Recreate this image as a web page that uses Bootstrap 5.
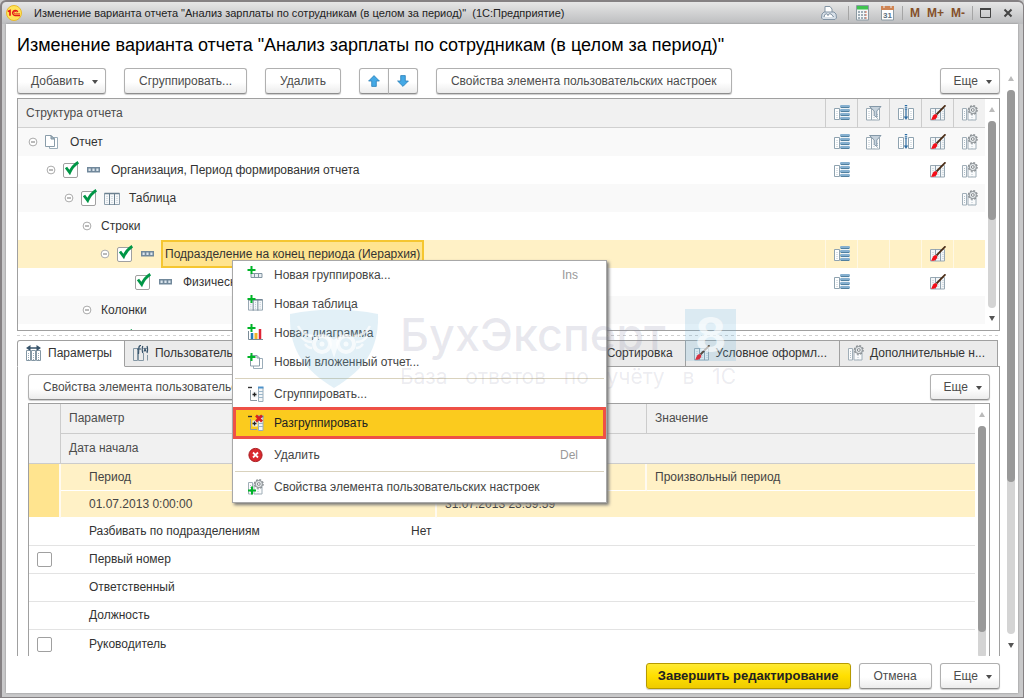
<!DOCTYPE html>
<html lang="ru">
<head>
<meta charset="utf-8">
<meta name="viewport" content="width=device-width, initial-scale=1">
<title>Изменение варианта отчета</title>
<link href="https://cdn.jsdelivr.net/npm/bootstrap@5.3.0/dist/css/bootstrap.min.css" rel="stylesheet">
<style>
:root{--line:#a0a0a0;--soft:#e3e3e3;--sel:#fff1c6;--selstrong:#ffe48f;--accent:#fbcb1e}
body{font-family:"Liberation Sans",Arial,sans-serif;font-size:12px;line-height:16px;color:#333;background:#c9c9ca;border:solid #858183;border-width:2px 1px 1px 2px;border-radius:6px 6px 0 0;overflow:hidden}
.titlebar{height:22px;padding:0 10px 0 4px;background:linear-gradient(#e6e6e6,#bcbdbf);color:#222;font-size:11px;border-radius:5px 5px 0 0}
.titlebar button{border:0;background:none;padding:0;line-height:16px;color:#84502a;font-weight:700;font-size:12px}
.titlebar .tools{gap:7px}
.titlebar .vsep{width:1px;height:14px;background:#a5a5a5}
.client{margin:0 5px 4px 4px;background:#fff;box-shadow:0 0 2px #888}
h1{font-size:18px;line-height:22px;color:#000;margin:10px 11px 12px}
svg{display:block;flex:none}
.work{padding:0 4px 0 11px}
.toolbar{gap:18px}
.b1c{--bs-btn-padding-x:14px;--bs-btn-padding-y:4px;--bs-btn-font-size:12px;--bs-btn-line-height:16px;--bs-btn-border-radius:3px;--bs-btn-color:#4c4c4c;--bs-btn-border-color:#b0b0b0;border-bottom-color:#8e8e8e;background:linear-gradient(#fff 55%,#ececec);box-shadow:0 1px 1px #ccc;white-space:nowrap}
.b1c.dropdown-toggle::after{border-width:3px;border-top-width:4px;vertical-align:1px;margin-left:8px}
.b1c.dropdown-toggle{padding-left:13px;padding-right:7px}
.b1c.arrow-btn{padding:6px 8px}
.b1c.primary{--bs-btn-padding-x:11px;--bs-btn-font-size:13px;background:linear-gradient(#ffea33,#ffdf00 50%,#eecb00);border-color:#b69a00;color:#222;font-weight:700}
.pane{border:1px solid var(--line);background:#fff}
.tree-pane{height:233px;overflow:hidden}
.grid1c{width:100%;table-layout:fixed;border-collapse:separate;border-spacing:0}
.grid1c td,.grid1c th{padding:0 8px;height:28px;font-weight:400;white-space:nowrap}
.grid1c thead th{background:#f1f1f1;color:#4c4c4c}
.tree thead th{height:29px;border-bottom:1px solid #d0d0d0}
.tree thead th+th{border-left:1px solid #ccc}
.tree .ic-col{width:32px;padding:0 7px 0 8px}
.tree tbody .ic-col{padding-left:9px}
.tree tbody .current .ic-col{padding-left:8px}
.tree tbody tr:nth-child(odd){background:#f9f9f9}
.tree tbody tr.current{background:var(--sel)}
.tree tr.current td+td{border-left:1px solid #fff8e4}
.tree td:first-child{padding-left:10px}
.tree .lv1{padding-left:18px}.tree .lv2{padding-left:36px}.tree .lv3{padding-left:54px}.tree .lv4{padding-left:72px}.tree .lv5{padding-left:107px}
.node{gap:7px;height:28px}
.node .caption{padding-left:2px}
.node .picked{margin-left:-2px;padding:4px 2px;border:2px solid #f5c630;background:var(--selstrong);height:28px}
.check1c{appearance:none;width:16px;height:18px;margin:0;flex:none;background:url("data:image/svg+xml,%3Csvg xmlns='http://www.w3.org/2000/svg' width='16' height='18'%3E%3Crect x='.5' y='2.5' width='14' height='14' rx='1.5' fill='%23fff' stroke='%23a0a0a0'/%3E%3C/svg%3E") no-repeat}
.check1c:checked{background-image:url("data:image/svg+xml,%3Csvg xmlns='http://www.w3.org/2000/svg' width='16' height='18'%3E%3Crect x='.5' y='2.5' width='14' height='14' rx='1.5' fill='%23fff' stroke='%23a0a0a0'/%3E%3Cpath d='M3 6.500l3.700 5Q9.500 5 15.300 1.300' fill='none' stroke='%23009646' stroke-width='2.800'/%3E%3C/svg%3E")}
.sbar{width:14px;flex:none}
.sbar .cap{height:22px}
.sbar .rail{width:8px;border-radius:4px;background:#d4d4d4}
.sbar .thumb{width:8px;border-radius:4px;background:#999}
.t53{height:53%}.t72{height:72%}.t89{height:89%}
.dash{height:1px;background:repeating-linear-gradient(90deg,#d0d0d0 0 3px,transparent 3px 6px)}
.tabs1c{padding-right:2px}
.tabs1c .nav-link{border:1px solid var(--line);border-left:0;border-radius:0;background:#ebebeb;color:#333;padding:4px 12px 4px 8px;height:27px;gap:6px;white-space:nowrap}
.tabs1c .nav-item:first-child .nav-link{border-left:1px solid var(--line);border-radius:3px 0 0 0}
.tabs1c .nav-link.active{background:#fff;color:#333;border-bottom-color:#fff}
.tabs1c .nav-item{margin-bottom:-1px;min-width:0}
.tabs1c .tab-user{flex:1 1 0}
.lower{padding:7px 9px 0 10px}
.lower .bar{margin-bottom:3px}
.params thead th{height:30px;border-bottom:1px solid #ccc}
.params thead .mark-col,.params thead .split{border-right:1px solid #ccc}
.params td{border-bottom:1px solid var(--soft)}
.params tbody td{padding-left:8px}
.params tbody .ind{padding-left:28px}
.params .current td{height:27px;background:var(--sel);border-bottom-color:#fff;color:#444}
.params .current .mark-col{background:var(--selstrong)}
.params .current .split,.params .current .mark-col{border-right:2px solid #fffaf0}
.params tr:last-child td{border-bottom:0}
.foot{padding:7px 18px 4px}
/* context menu over the report structure */
.ctx{left:226px;top:192px;width:375px;padding:0;border:1px solid #a8a8a8;border-radius:0;box-shadow:2px 2px 3px #777;font-size:12px;display:block;--bs-dropdown-bg:#fff}
.ctx .dropdown-item{display:flex;align-items:center;gap:9px;padding:0 28px 0 14px;height:29px;color:#444;line-height:16px}
.ctx .key{margin-left:auto;color:#999}
.ctx .hot{border:3px solid #ee5046;background:var(--accent);color:#222;height:32px;padding-left:11px;margin:-2px 0 2px}
.ctx .dropdown-divider{margin:1px 2px;border-color:#d9d2bd}
.wm{left:284px;top:241px;width:446px;height:80px;pointer-events:none;z-index:1100}
.wm-body{margin-left:20px}
.wm-name{font-family:Inter,"Open Sans",sans-serif;font-size:45px;line-height:52px;color:#70709428;font-weight:500}
.wm-eight{width:51px;height:52px;background:#6eb4d936;color:#ffffffa0;font:700 48px/52px Inter,sans-serif;text-align:center}
.wm-tag{font-family:Inter,sans-serif;font-size:21px;line-height:32px;color:#70709422}
</style>
</head>
<body class="vh-100 d-flex flex-column">
<svg width="0" height="0" class="position-absolute" aria-hidden="true">
<defs>
<symbol id="cols" viewBox="0 0 16 16"><path d="M.5 3.500h15v11H.5z" fill="#f6f8fa" stroke="#8fa0ad"/><path d="M.5 3.500h15" stroke="#6c8190" stroke-width="1.500"/><path d="M5.500 3v12M10.500 3v12" stroke="#6c8190"/><path d="M3 6v8M8 6v8M13 6v8" stroke="#b9c5cd" stroke-dasharray="1 1"/></symbol>
<symbol id="fields" viewBox="0 0 16 16"><path d="M.5 3.500h5v11H.5z" fill="#fff" stroke="#8fa3b0"/><path d="M3 6v8" stroke="#b3c1ca" stroke-dasharray="1 1"/><path d="M7 2h8v12H7z" fill="#edf3f7"/><g fill="#86b0d0"><rect x="6" y="0" width="10" height="3" rx="1.300"/><rect x="6" y="4" width="10" height="3" rx="1.300"/><rect x="6" y="8" width="10" height="3" rx="1.300"/><rect x="6" y="12" width="10" height="3" rx="1.300"/></g><path d="M7 2.500h8M7 6.500h8M7 10.500h8M7 14.500h8" stroke="#51809f"/></symbol>
<symbol id="filter" viewBox="0 0 16 16"><path d="M.5 3.500h5v11.500H.5zM9 3.500h4.500v11.500H5.500" fill="#fff" stroke="#98a8b3"/><path d="M3 6v8M8 10v5M11.500 9v5" stroke="#b3c1ca" stroke-dasharray="1 1"/><path d="M3.500 1.500h11.500L10.800 6v6.500l-2.600-2V6z" fill="#c6d2dc" stroke="#8498a8"/></symbol>
<symbol id="sort" viewBox="0 0 16 16"><path d="M.5 3.500h5v11h-5zM10.500 3.500h5v11h-5z" fill="#fff" stroke="#8fa3b0"/><path d="M3 6v8M13 6v8" stroke="#b3c1ca" stroke-dasharray="1 1"/><path d="M8 4v9" stroke="#2d6da3" stroke-width="1.200"/><path d="M5.800 11.500h4.400L8 15z" fill="#2d6da3"/><path d="M8 0v5" stroke="#2d6da3" stroke-width="2.400" stroke-dasharray="1 .8"/></symbol>
<symbol id="brush" viewBox="0 0 16 16"><path d="M.5 3.500h14v11.500H.5z" fill="#f3f6f8" stroke="#98a8b3"/><path d="M5.500 3v12M10.500 3v12" stroke="#8fa0ad"/><path d="M3 6v8M8 6v8M13 6v8" stroke="#b9c5cd" stroke-dasharray="1 1"/><path d="M15.500.3L6.500 9.500" stroke="#4b2d17" stroke-width="1.800"/><path d="M5 9.300c2.500-.3 3 2 1.500 3.700-1.300 1.600-3.500 2.200-5.500 1.700C2.500 13 2.500 9.800 5 9.300z" fill="#f40d18"/></symbol>
<symbol id="gear" viewBox="0 0 16 16"><path d="M.5 3.500h4v11.500h-4zM6 4.500h8v10.500H6z" fill="#fafbfc" stroke="#a0aeb8"/><path d="M2.500 6v8M10 10v5" stroke="#b3c1ca" stroke-dasharray="1 1"/><circle cx="10.800" cy="5" r="4.200" fill="#e8ebed" stroke="#84898d" stroke-width="1.500" stroke-dasharray="1.800 1.500"/><circle cx="10.800" cy="5" r="3.600" fill="#e4e8ea" stroke="#90969a"/><circle cx="10.800" cy="5" r="1.400" fill="#fff" stroke="#84898d"/></symbol>
<symbol id="group" viewBox="0 0 16 16"><path d="M1 5h13v5.500H1z" fill="#71889b"/><path d="M2.500 6.500h2.200V9H2.500zM6.400 6.500h2.200V9H6.400zM10.300 6.500h2.200V9h-2.200z" fill="#dbe5ed"/></symbol>
<symbol id="doc" viewBox="0 0 16 16"><path d="M4.500 3.500h8v11h-8z" fill="#fff" stroke="#9badb9"/><path d="M.5 1.500H6L9.500 5v7.500h-9z" fill="#fff" stroke="#8a9daa"/><path d="M6 1.500V5h3.500z" fill="#aebdc7" stroke="#7c909e"/></symbol>
<symbol id="exp" viewBox="0 0 10 10"><circle cx="5" cy="5" r="3.900" fill="#fff" stroke="#aaa"/><path d="M3 5h4" stroke="#777"/></symbol>
<symbol id="plus" viewBox="0 0 16 16"><path d="M4.500 0v8M.5 4h8" stroke="#00b428" stroke-width="2"/></symbol>
<symbol id="fx" viewBox="0 0 16 16"><path d="M.5 3.500h4v12h-4zM5.500 8v7.500h5V8M14.500 10v5.500" fill="none" stroke="#8497a4"/><path d="M8 .5C5 .5 6 4 5.500 9M4 4h4M9.800 1c-1 3-1 4 0 7M14 1c1 3 1 4 0 7M10.800 3l2.500 3.500M13.300 3l-2.500 3.500" fill="none" stroke="#37536a" stroke-width="1.200"/></symbol>
<symbol id="struct" viewBox="0 0 16 16"><path d="M0 1.500h4" stroke="#333" stroke-width="1.400"/><path d="M2.500 4v10.500H9" fill="none" stroke="#8b99a3"/><path d="M4.500 5.500h5v6h-5z" fill="#eef2f5"/><path d="M6.500 6.500v4M4.500 8.500h4" stroke="#222" stroke-width="1.300"/><path d="M10.500 1.500h4.500v14h-4.500z" fill="#f3f6f8" stroke="#9badb9"/><path d="M10 1.500h5.500" stroke="#4d93cb" stroke-width="2"/><path d="M10.500 5.500h4.500M10.500 8.500h4.500M10.500 11.500h4.500" stroke="#9bb6ca"/></symbol>
<symbol id="up" viewBox="0 0 12 12"><path d="M6 .6L11.400 6H8.300v5.400H3.700V6H.6z" fill="#44a9e6" stroke="#2a7fb8" stroke-width=".8"/></symbol>
<symbol id="triup" viewBox="0 0 6 5"><path d="M0 5l3-5 3 5z" fill="#bbb"/></symbol>
<symbol id="tridn" viewBox="0 0 6 5"><path d="M0 0h6L3 5z" fill="#555"/></symbol>
</defs>
</svg>

<header class="titlebar d-flex align-items-center">
  <svg width="16" height="16" viewBox="0 0 16 16"><circle cx="8" cy="8" r="7.500" fill="#ffe45a" stroke="#e9b928"/><path d="M1.800 6.500L4 5.500v5.300" fill="none" stroke="#e31b1b" stroke-width="1.700"/><path d="M11.800 7A2.700 2.500 0 1 0 9 10.500h5" fill="none" stroke="#e31b1b" stroke-width="1.400"/><path d="M10.500 7.300A1.300 1.200 0 1 0 9.300 8.800H14" fill="none" stroke="#e31b1b" stroke-width=".8"/></svg>
  <span class="ms-2 ps-1 flex-grow-1 text-nowrap">Изменение варианта отчета "Анализ зарплаты по сотрудникам (в целом за период)"&nbsp; (1С:Предприятие)</span>
  <div class="tools d-flex align-items-center">
    <button type="button" aria-label="Печать"><svg width="16" height="16" viewBox="0 0 16 16"><path d="M4 8V1.500h5L11 4v3" fill="#fff" stroke="#8293a3"/><path d="M1 9l2-2h10l2 2 .5 4-1.500 1.500h-12L.5 13z" fill="#d8e0e8" stroke="#8294a5"/><path d="M3 12c1-4 3-4 4-1.500C8 8 10 8 12.500 12" fill="#fff" stroke="#6c8093"/></svg></button>
    <span class="vsep ms-1"></span>
    <button type="button" aria-label="Калькулятор"><svg width="14" height="16" viewBox="0 0 14 16"><path d="M.5.500h12v14.500H.5z" fill="#f4f6f7" stroke="#8c9aa3"/><path d="M1 1h11v3.500H1z" fill="#3fc34f"/><path d="M2 7h9M2 10h9M2 13h9" stroke="#8295a3" stroke-width="1.500" stroke-dasharray="2 1"/><path d="M10 6v8" stroke="#e47a5c" stroke-dasharray="2 1"/></svg></button>
    <button type="button" class="ms-1" aria-label="Календарь"><svg width="14" height="16" viewBox="0 0 14 16"><path d="M.5 1.500h12V15H.5z" fill="#fff" stroke="#8c9aa3"/><path d="M0 1h13v4H0z" fill="#cf8454"/><path d="M3 0v3M10 0v3" stroke="#eee"/><text x="6.500" y="12.500" font-size="8" font-weight="700" text-anchor="middle" fill="#5b6f80">31</text></svg></button>
    <span class="vsep"></span>
    <button type="button">M</button><button type="button">M+</button><button type="button">M-</button>
    <span class="vsep"></span>
    <button type="button" aria-label="Развернуть"><svg width="12" height="12" viewBox="0 0 12 12"><path d="M.5 1.500h10v9H.5z" fill="none" stroke="#444"/><path d="M0 2h11" stroke="#444" stroke-width="2"/></svg></button>
    <button type="button" class="ms-1" aria-label="Закрыть"><svg width="10" height="10" viewBox="0 0 10 10"><path d="M1.500 1.500l7 7M8.500 1.500l-7 7" stroke="#444" stroke-width="2"/></svg></button>
  </div>
</header>

<main class="client flex-grow-1 d-flex flex-column overflow-hidden">
  <h1 class="fw-normal">Изменение варианта отчета "Анализ зарплаты по сотрудникам (в целом за период)"</h1>
  <div class="d-flex flex-grow-1 overflow-hidden position-relative">
    <section class="work flex-grow-1 overflow-hidden">
      <div class="d-flex align-items-start mb-1">
        <div class="d-flex toolbar flex-grow-1">
          <button type="button" class="btn b1c dropdown-toggle">Добавить</button>
          <button type="button" class="btn b1c">Сгруппировать...</button>
          <button type="button" class="btn b1c">Удалить</button>
          <div class="btn-group">
            <button type="button" class="btn b1c arrow-btn" aria-label="Вверх"><svg width="12" height="12"><use href="#up"/></svg></button>
            <button type="button" class="btn b1c arrow-btn" aria-label="Вниз"><svg width="12" height="12" viewBox="0 0 12 12"><use href="#up" transform="rotate(180 6 6)"/></svg></button>
          </div>
          <button type="button" class="btn b1c">Свойства элемента пользовательских настроек</button>
        </div>
        <button type="button" class="btn b1c dropdown-toggle">Еще</button>
      </div>

      <div class="pane tree-pane d-flex">
        <div class="flex-grow-1">
        <table class="grid1c tree">
          <colgroup><col><col class="ic-col"><col class="ic-col"><col class="ic-col"><col class="ic-col"><col class="ic-col"></colgroup>
          <thead><tr><th>Структура отчета</th>
            <th class="ic-col"><svg width="16" height="16"><use href="#fields"/></svg></th><th class="ic-col"><svg width="16" height="16"><use href="#filter"/></svg></th><th class="ic-col"><svg width="16" height="16"><use href="#sort"/></svg></th><th class="ic-col"><svg width="16" height="16"><use href="#brush"/></svg></th><th class="ic-col"><svg width="16" height="16"><use href="#gear"/></svg></th></tr></thead>
          <tbody>
          <tr><td><div class="node d-flex align-items-center"><svg width="10" height="10"><use href="#exp"/></svg><svg width="16" height="16"><use href="#doc"/></svg><span class="caption">Отчет</span></div></td>
            <td class="ic-col"><svg width="16" height="16"><use href="#fields"/></svg></td><td class="ic-col"><svg width="16" height="16"><use href="#filter"/></svg></td><td class="ic-col"><svg width="16" height="16"><use href="#sort"/></svg></td><td class="ic-col"><svg width="16" height="16"><use href="#brush"/></svg></td><td class="ic-col"><svg width="16" height="16"><use href="#gear"/></svg></td></tr>
          <tr><td><div class="node lv1 d-flex align-items-center"><svg width="10" height="10"><use href="#exp"/></svg><input class="check1c" type="checkbox" id="c1" checked><svg width="16" height="16"><use href="#group"/></svg><label class="caption" for="c1">Организация, Период формирования отчета</label></div></td>
            <td class="ic-col"><svg width="16" height="16"><use href="#fields"/></svg></td><td></td><td></td><td class="ic-col"><svg width="16" height="16"><use href="#brush"/></svg></td><td class="ic-col"><svg width="16" height="16"><use href="#gear"/></svg></td></tr>
          <tr><td><div class="node lv2 d-flex align-items-center"><svg width="10" height="10"><use href="#exp"/></svg><input class="check1c" type="checkbox" id="c2" checked><svg width="16" height="16"><use href="#cols"/></svg><label class="caption" for="c2">Таблица</label></div></td>
            <td></td><td></td><td></td><td></td><td class="ic-col"><svg width="16" height="16"><use href="#gear"/></svg></td></tr>
          <tr><td><div class="node lv3 d-flex align-items-center"><svg width="10" height="10"><use href="#exp"/></svg><span class="caption">Строки</span></div></td><td></td><td></td><td></td><td></td><td></td></tr>
          <tr class="current"><td><div class="node lv4 d-flex align-items-center"><svg width="10" height="10"><use href="#exp"/></svg><input class="check1c" type="checkbox" id="c3" checked><svg width="16" height="16"><use href="#group"/></svg><label class="picked" for="c3">Подразделение на конец периода (Иерархия)</label></div></td>
            <td class="ic-col"><svg width="16" height="16"><use href="#fields"/></svg></td><td></td><td></td><td class="ic-col"><svg width="16" height="16"><use href="#brush"/></svg></td><td></td></tr>
          <tr><td><div class="node lv5 d-flex align-items-center"><input class="check1c" type="checkbox" id="c4" checked><svg width="16" height="16"><use href="#group"/></svg><label class="caption" for="c4">Физическое лицо</label></div></td>
            <td class="ic-col"><svg width="16" height="16"><use href="#fields"/></svg></td><td></td><td></td><td class="ic-col"><svg width="16" height="16"><use href="#brush"/></svg></td><td></td></tr>
          <tr><td><div class="node lv3 d-flex align-items-center"><svg width="10" height="10"><use href="#exp"/></svg><span class="caption">Колонки</span></div></td><td></td><td></td><td></td><td></td><td></td></tr>
          <tr><td><div class="node lv4 d-flex align-items-center"><svg width="10" height="10"><use href="#exp"/></svg><input class="check1c" type="checkbox" aria-label="Группировка колонок" checked></div></td>
            <td class="ic-col"><svg width="16" height="16"><use href="#fields"/></svg></td><td class="ic-col"><svg width="16" height="16"><use href="#filter"/></svg></td><td class="ic-col"></td><td class="ic-col"><svg width="16" height="16"><use href="#brush"/></svg></td><td class="ic-col"><svg width="16" height="16"><use href="#gear"/></svg></td></tr>
          </tbody>
        </table>
        </div>
        <div class="sbar d-flex flex-column align-items-center">
          <div class="cap d-flex align-items-center"><svg width="6" height="5"><use href="#triup"/></svg></div>
          <div class="rail flex-grow-1"><div class="thumb t53"></div></div>
          <div class="cap d-flex align-items-center"><svg width="6" height="5"><use href="#tridn"/></svg></div>
        </div>
      </div>

      <div class="dash my-1"></div>

      <ul class="nav tabs1c flex-nowrap">
        <li class="nav-item"><a href="#params" class="nav-link active d-flex align-items-center"><svg width="16" height="16" viewBox="0 0 16 16"><path d="M.5 5.500h4v10h-4zM5.500 5.500h4v10h-4zM10.500 5.500h4v10h-4z" fill="#fff" stroke="#8497a4"/><path d="M2.500 8v7M7.500 8v7M12.500 8v7" stroke="#9badb9" stroke-dasharray="1 1"/><path d="M2 3h11" stroke="#37536a" stroke-width="1.500"/><path d="M4.500 0v6L0 3zM10.500 0v6L15 3z" fill="#37536a"/></svg>Параметры</a></li>
        <li class="nav-item tab-user"><a href="#user" class="nav-link d-flex align-items-center overflow-hidden"><svg width="16" height="16"><use href="#fx"/></svg>Пользовательские поля</a></li>
        <li class="nav-item"><a href="#sorting" class="nav-link d-flex align-items-center"><svg width="16" height="16"><use href="#sort"/></svg>Сортировка</a></li>
        <li class="nav-item"><a href="#cond" class="nav-link d-flex align-items-center"><svg width="16" height="16"><use href="#brush"/></svg>Условное оформл...</a></li>
        <li class="nav-item"><a href="#extra" class="nav-link d-flex align-items-center"><svg width="16" height="16"><use href="#gear"/></svg>Дополнительные н...</a></li>
      </ul>

      <div class="pane lower" id="params">
        <div class="bar d-flex justify-content-between">
          <button type="button" class="btn b1c">Свойства элемента пользовательских настроек</button>
          <button type="button" class="btn b1c dropdown-toggle">Еще</button>
        </div>
        <div class="pane d-flex">
          <div class="flex-grow-1">
          <table class="grid1c params">
            <colgroup><col style="width:32px"><col style="width:342px"><col style="width:34px"><col style="width:210px"><col></colgroup>
            <thead>
              <tr><th rowspan="2" class="mark-col"></th><th colspan="3" class="split">Параметр</th><th>Значение</th></tr>
              <tr><th colspan="4">Дата начала</th></tr>
            </thead>
            <tbody>
              <tr class="current"><td rowspan="2" class="mark-col"></td><td colspan="3" class="ind split">Период</td><td>Произвольный период</td></tr>
              <tr class="current"><td colspan="2" class="ind split">01.07.2013 0:00:00</td><td colspan="2">31.07.2013 23:59:59</td></tr>
              <tr><td></td><td class="ind">Разбивать по подразделениям</td><td colspan="3">Нет</td></tr>
              <tr><td><input class="check1c d-block" type="checkbox" id="p1"></td><td class="ind" colspan="4"><label for="p1">Первый номер</label></td></tr>
              <tr><td></td><td class="ind" colspan="4">Ответственный</td></tr>
              <tr><td></td><td class="ind" colspan="4">Должность</td></tr>
              <tr><td><input class="check1c d-block" type="checkbox" id="p2"></td><td class="ind" colspan="4"><label for="p2">Руководитель</label></td></tr>
            </tbody>
          </table>
          </div>
          <div class="sbar d-flex flex-column align-items-center">
            <div class="cap d-flex align-items-center"><svg width="6" height="5"><use href="#triup"/></svg></div>
            <div class="rail flex-grow-1"><div class="thumb t89"></div></div>
          </div>
        </div>
      </div>
    </section>

    <div class="sbar d-flex flex-column align-items-center">
      <div class="cap d-flex align-items-center"><svg width="6" height="5"><use href="#triup"/></svg></div>
      <div class="rail flex-grow-1"><div class="thumb t72"></div></div>
      <div class="cap d-flex align-items-center"><svg width="6" height="5"><use href="#tridn"/></svg></div>
    </div>

    <div class="ctx dropdown-menu position-absolute">
      <button type="button" class="dropdown-item"><svg width="18" height="18" viewBox="0 0 18 18"><path d="M4 7.500h11v4H4zM7.500 7.500v4M11.500 7.500v4" fill="#e9eef2" stroke="#8194a1"/><use href="#plus" width="16" height="16"/></svg>Новая группировка...<span class="key">Ins</span></button>
      <button type="button" class="dropdown-item"><svg width="18" height="18" viewBox="0 0 18 18"><use href="#cols" x="1" y="1" width="15" height="16"/><use href="#plus" width="16" height="16"/></svg>Новая таблица</button>
      <button type="button" class="dropdown-item"><svg width="18" height="18" viewBox="0 0 18 18"><path d="M1.500 7v8.500H16" fill="none" stroke="#7a8b97"/><path d="M5 15v-6" stroke="#277bb5" stroke-width="2.500"/><path d="M9 15V9" stroke="#f0b428" stroke-width="3"/><path d="M13 15V5" stroke="#df2335" stroke-width="2.500"/><use href="#plus" width="16" height="16"/></svg>Новая диаграмма</button>
      <button type="button" class="dropdown-item"><svg width="18" height="18" viewBox="0 0 18 18"><path d="M6.500 5.500h9v10h-9z" fill="#fff" stroke="#9badb9"/><path d="M3.500 2.500h6.500l2.500 2.500v8h-9z" fill="#fff" stroke="#8a9daa"/><path d="M10 2.500V5h2.500" fill="none" stroke="#8a9daa"/><use href="#plus" width="16" height="16"/></svg>Новый вложенный отчет...</button>
      <hr class="dropdown-divider">
      <button type="button" class="dropdown-item"><svg width="18" height="18"><use href="#struct" x="1" y="1" width="16" height="16"/></svg>Сгруппировать...</button>
      <button type="button" class="dropdown-item hot"><svg width="18" height="18" viewBox="0 0 18 18"><use href="#struct" x="1" y="1" width="16" height="16"/><path d="M9 1.500l6 6M15 1.500l-6 6" stroke="#d51f22" stroke-width="2.600"/></svg>Разгруппировать</button>
      <button type="button" class="dropdown-item"><svg width="18" height="18" viewBox="0 0 18 18"><circle cx="8.500" cy="9" r="6.600" fill="#d9292e" stroke="#a91b20"/><path d="M6 6.500l5 5M11 6.500l-5 5" stroke="#fff" stroke-width="1.800"/></svg>Удалить<span class="key">Del</span></button>
      <hr class="dropdown-divider">
      <button type="button" class="dropdown-item"><svg width="18" height="18" viewBox="0 0 18 18"><use href="#gear" x="1" y="1" width="16" height="16"/><path d="M5 8.500v8M1 12.500h8" stroke="#00b428" stroke-width="2"/></svg>Свойства элемента пользовательских настроек</button>
    </div>

    <div class="wm position-absolute d-flex" aria-hidden="true">
      <svg width="90" height="80" viewBox="0 0 90 80"><path d="M0 5Q44-4 88 5C89 38 77 59 44 79 11 59-1 38 0 5z" fill="#6eb4d9" opacity=".2"/><g fill="none" stroke="#fff" opacity=".7"><circle cx="32" cy="35" r="8" stroke-width="4"/><circle cx="56" cy="35" r="8" stroke-width="4"/><path d="M8 17q5 10 16 10M80 17q-5 10-16 10M11 27q3 6 11 6M77 27q-3 6-11 6M15 35q3 4 7 4M73 35q-3 4-7 4" stroke-width="2.500"/></g><path d="M36 25l8 6 8-6-8 24z" fill="#fff" opacity=".7"/><circle cx="32" cy="35" r="2.500" fill="#fff" opacity=".7"/><circle cx="56" cy="35" r="2.500" fill="#fff" opacity=".7"/></svg>
      <div class="wm-body flex-grow-1">
        <div class="d-flex justify-content-between"><span class="wm-name">БухЭксперт</span><span class="wm-eight">8</span></div>
        <div class="wm-tag d-flex justify-content-between"><span>База</span><span>ответов</span><span>по</span><span>учёту</span><span>в</span><span>1С</span></div>
      </div>
    </div>
  </div>

  <footer class="foot d-flex justify-content-end gap-2">
    <button type="button" class="btn b1c primary">Завершить редактирование</button>
    <button type="button" class="btn b1c">Отмена</button>
    <button type="button" class="btn b1c dropdown-toggle">Еще</button>
  </footer>
</main>
<script src="https://cdn.jsdelivr.net/npm/bootstrap@5.3.0/dist/js/bootstrap.bundle.min.js"></script>
</body>
</html>
